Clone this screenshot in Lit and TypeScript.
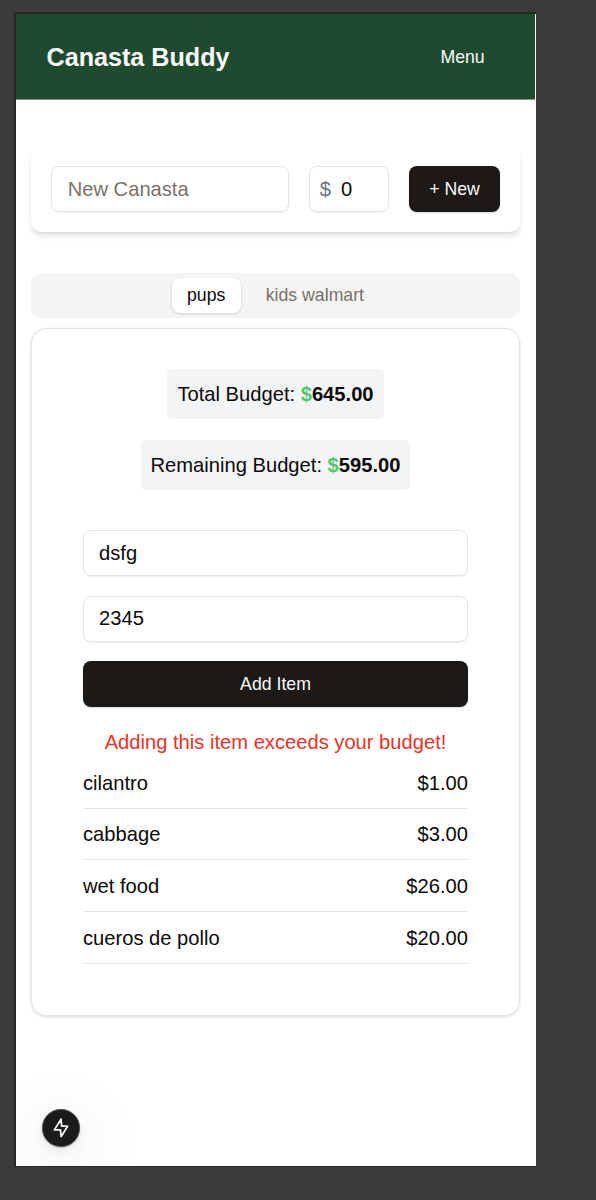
import { LitElement, html, css } from "lit";
import { customElement, state } from "lit/decorators.js";

interface Item {
  name: string;
  price: number;
}

@customElement("app-root")
export class AppRoot extends LitElement {
  static styles = css`
    :host {
      display: block;
      box-sizing: border-box;
      width: 596px;
      height: 1200px;
      padding: 12px 0 0 14px;
      overflow: hidden;
      background: #3b3b3b;
      color: #0c0a09;
      font: 20.17px/30px "Liberation Sans", Arial, sans-serif;
    }
    * {
      box-sizing: border-box;
    }
    .device {
      position: relative;
      width: 522px;
      height: 1155px;
      border: solid #282828;
      border-width: 2px 0 1px 2px;
      background: #fff;
      overflow: hidden;
    }
    .header {
      display: flex;
      align-items: center;
      justify-content: space-between;
      width: 519px;
      height: 86px;
      padding: 0 50.3px 0 30.5px;
      background: #1f4a2f;
      border-bottom: 1px solid #7b9583;
      color: #fafaf9;
    }
    .brand {
      margin: 0;
      font-size: 25.15px;
      font-weight: 700;
      line-height: 36px;
    }
    .menu {
      font-size: 17.7px;
      line-height: 26px;
    }
    .main {
      display: flex;
      flex-direction: column;
      padding: 46px 16px 0 15px;
    }
    .create {
      display: flex;
      gap: 20px;
      height: 86px;
      padding: 20px 20px 0 20px;
      border-radius: 10px;
      box-shadow: 0 5px 7px -1px rgba(0, 0, 0, 0.11), 0 2px 4px -2px rgba(0, 0, 0, 0.12);
    }
    .field {
      display: block;
      width: 100%;
      height: 46px;
      margin: 0;
      padding: 0 15px;
      border: 1px solid #e4e4e3;
      border-radius: 8px;
      outline: 0;
      background: transparent;
      box-shadow: 0 1px 2px rgba(0, 0, 0, 0.07);
      color: #0c0a09;
      font: inherit;
    }
    .field::placeholder {
      color: #78716c;
      opacity: 1;
    }
    .name {
      flex: none;
      width: 238.4px;
      padding-left: 15.7px;
    }
    .amount {
      display: flex;
      flex: none;
      align-items: center;
      gap: 10px;
      width: 79.6px;
      padding: 0 0 0 9.4px;
    }
    .currency {
      color: #6b7280;
    }
    .value {
      width: 40px;
      padding: 0;
      border: 0;
      outline: 0;
      background: none;
      color: inherit;
      font: inherit;
    }
    .button {
      display: block;
      width: 100%;
      height: 46px;
      padding: 0;
      border: 0;
      border-radius: 8px;
      background: #1c1917;
      box-shadow: 0 1px 2px rgba(0, 0, 0, 0.15);
      color: #fafaf9;
      font: 17.7px/26px "Liberation Sans", Arial, sans-serif;
    }
    .create .button {
      width: 91px;
    }
    .tabs {
      display: flex;
      justify-content: center;
      align-items: center;
      gap: 10px;
      height: 45px;
      margin-top: 40.5px;
      border-radius: 10px;
      background: #f5f5f4;
    }
    .tab {
      height: 35px;
      padding: 0 15.2px;
      border: 0;
      border-radius: 8px;
      background: none;
      color: #78716c;
      font: 17.7px/26px "Liberation Sans", Arial, sans-serif;
    }
    .tab.active {
      background: #fff;
      box-shadow: 0 1px 3px rgba(0, 0, 0, 0.16);
      color: #0c0a09;
    }
    .panel {
      display: flex;
      flex-direction: column;
      height: 688px;
      margin-top: 10.5px;
      padding: 40.4px 51px 0;
      border: 1px solid #e2e2e1;
      border-radius: 15px;
      box-shadow: 0 1px 3px rgba(0, 0, 0, 0.14);
    }
    .budgets {
      display: flex;
      flex-direction: column;
      align-items: center;
      gap: 21px;
    }
    .budget {
      height: 50px;
      padding: 0 10px;
      border-radius: 5px;
      background: #f3f4f6;
      line-height: 51px;
      white-space: nowrap;
    }
    .sign {
      color: #53c66c;
    }
    .form {
      display: flex;
      flex-direction: column;
      gap: 19.5px;
      margin-top: 39.7px;
    }
    .form .field {
      padding-top: 0.8px;
    }
    .error {
      margin: 19.8px 0 0;
      color: #e93327;
      text-align: center;
      white-space: nowrap;
    }
    .items {
      margin: 0.3px 0 0;
      padding: 0;
      list-style: none;
    }
    .item {
      display: flex;
      justify-content: space-between;
      height: 51.67px;
      padding-top: 10.6px;
      border-bottom: 1px solid #e4e4e3;
    }
    .badge {
      position: absolute;
      left: 26px;
      top: 1095px;
      display: grid;
      place-items: center;
      width: 37.5px;
      height: 37.5px;
      border: 1px solid #4c4c4c;
      border-radius: 50%;
      background: #1b1b1c;
      box-shadow: 0 1px 2px rgba(0, 0, 0, 0.2), 0 5px 14px rgba(0, 0, 0, 0.05),
        0 16px 70px 8px rgba(0, 0, 0, 0.09);
    }
  `;

  @state() private tabs = ["pups", "kids walmart"];
  @state() private active = "pups";
  @state() private items: Item[] = [
    { name: "cilantro", price: 1 },
    { name: "cabbage", price: 3 },
    { name: "wet food", price: 26 },
    { name: "cueros de pollo", price: 20 },
  ];

  private budget(label: string, amount: number) {
    return html`<div class="budget">${label}: <b><span class="sign">$</span>${amount.toFixed(2)}</b></div>`;
  }

  render() {
    const total = 645;
    const spent = this.items.reduce((sum, i) => sum + i.price, 0);
    return html`
      <div class="device">
        <header class="header">
          <h1 class="brand">Canasta Buddy</h1>
          <span class="menu">Menu</span>
        </header>
        <main class="main">
          <div class="create">
            <input class="field name" placeholder="New Canasta" />
            <label class="field amount"><span class="currency">$</span><input class="value" value="0" /></label>
            <button class="button">+ New</button>
          </div>
          <div class="tabs">
            ${this.tabs.map(
              (t) => html`<button class="tab ${t === this.active ? "active" : ""}" @click=${() => (this.active = t)}>${t}</button>`
            )}
          </div>
          <section class="panel">
            <div class="budgets">
              ${this.budget("Total Budget", total)} ${this.budget("Remaining Budget", total - spent)}
            </div>
            <div class="form">
              <input class="field" value="dsfg" />
              <input class="field" value="2345" />
              <button class="button">Add Item</button>
            </div>
            <p class="error">Adding this item exceeds your budget!</p>
            <ul class="items">
              ${this.items.map(
                (i) => html`<li class="item"><span>${i.name}</span><span>$${i.price.toFixed(2)}</span></li>`
              )}
            </ul>
          </section>
        </main>
        <div class="badge">
          <svg width="22" height="22" viewBox="0 0 22 22" fill="none" stroke="#f4f4f4" stroke-width="1.8" stroke-linejoin="round">
            <path d="M11 2.2 L4.4 12.9 H10.4 L11.2 19.6 L17.6 9.2 H11.6 Z" />
          </svg>
        </div>
      </div>
    `;
  }
}
